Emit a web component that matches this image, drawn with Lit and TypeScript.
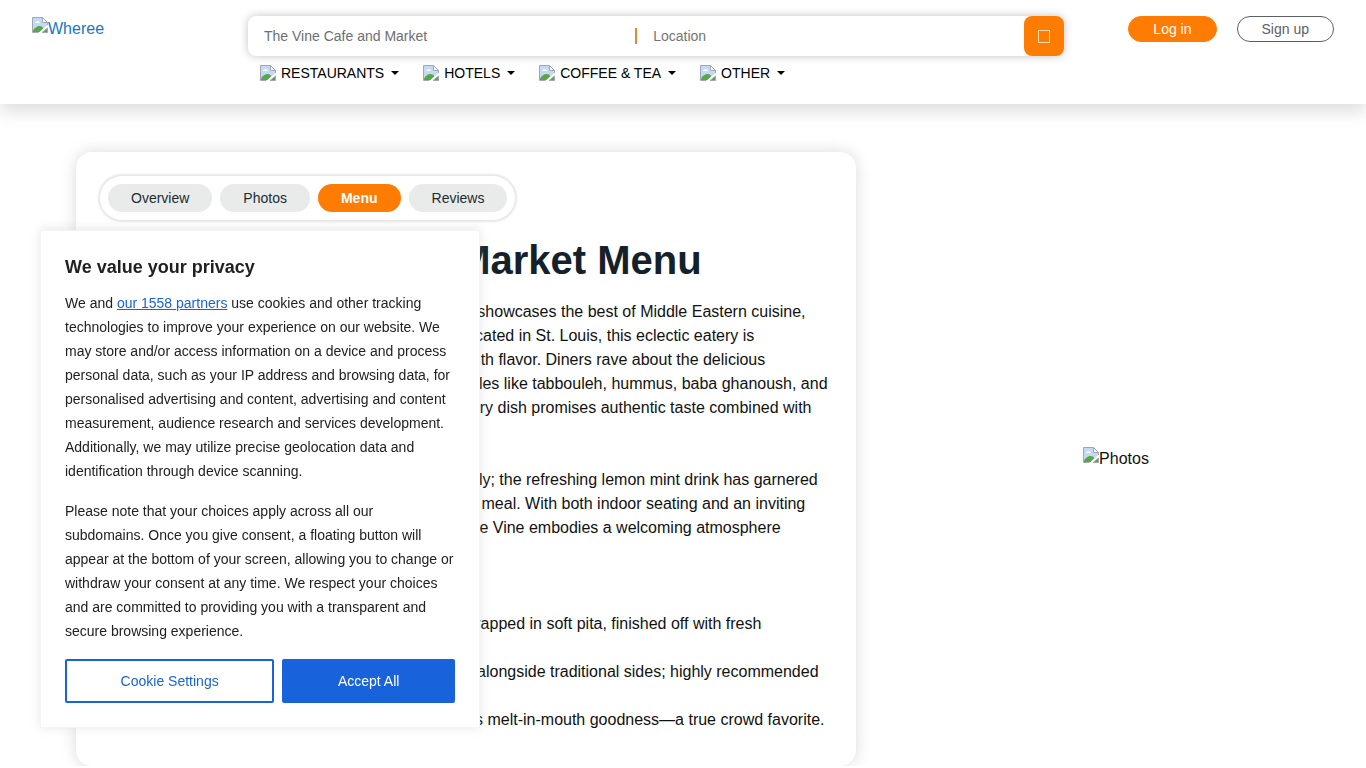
import { LitElement, html, css, svg } from "lit";
import { customElement } from "lit/decorators.js";

const brokenImage = () => html`<svg class="broken" viewBox="0 0 16 16" width="16" height="16" aria-hidden="true">
  ${svg`
    <path d="M1 1h9.5L15 5.500V8.500L8 15H1z" fill="#c3d9f6"/>
    <path d="M3 6c0-1 .8-1.600 1.600-1.400.5-1.100 2.300-.9 2.500.4.900 0 1.200.500 1.100 1H3z" fill="#fff"/>
    <path d="M1 15v-1.500C3 10.500 5 9 7.500 9c1.700 0 3 .8 3.800 2.200L7.500 15z" fill="#55a747"/>
    <path d="M.5 15.500V.500h10l5 5v3M.5 15.500h6" fill="none" stroke="#a3a7b5"/>
    <path d="M10.500.500v5h5z" fill="#fff" stroke="#a3a7b5"/>
    <path d="M15.500 11v4.500H10z" fill="#55a747" stroke="#a3a7b5"/>
    <path d="M16 8.500L7.500 16" stroke="#fff" stroke-width="1.500"/>
  `}
</svg>`;

const categories = ["RESTAURANTS", "HOTELS", "COFFEE & TEA", "OTHER"];
const tabs = ["Overview", "Photos", "Menu", "Reviews"];

const intro = [
  "The menu at The Vine Cafe and Market impressively showcases the best of Middle Eastern cuisine,",
  "offering a delightful blend of flavors and traditions. Located in St. Louis, this eclectic eatery is",
  "celebrated for its colorful dishes that come bursting with flavor. Diners rave about the delicious",
  "shawarma, falafel, and a generous array of fresh staples like tabbouleh, hummus, baba ghanoush, and",
  "lentil soup. Prepared fresh in the bustling kitchen, every dish promises authentic taste combined with",
  "warm hospitality.",
].join("\n");

const drinks = [
  "The delicious beverage selection shines just as brightly; the refreshing lemon mint drink has garnered",
  "praise from customers as a perfect companion to any meal. With both indoor seating and an inviting",
  "patio for long warm summer evenings with friends, The Vine embodies a welcoming atmosphere",
  "for everyone who visits.",
].join("\n");

const highlights = [
  "Chicken Shawarma: servings of marinated chicken wrapped in soft pita, finished off with fresh\nvegetables.",
  "Falafel Platter: Crispy spiced chickpea fritters served alongside traditional sides; highly recommended\nby regulars.",
  "Lamb Kebab: Perfectly charred grilled meat that offers melt-in-mouth goodness—a true crowd favorite.",
];

@customElement("site-header")
class SiteHeader extends LitElement {
  static styles = css`
    :host { display: block; }
    * { box-sizing: border-box; }
    .bar {
      display: flex; align-items: flex-start; padding: 16px 32px 0;
      height: 104px; background: #fff; box-shadow: 0 8px 16px rgba(0, 0, 0, 0.13);
    }
    .logo {
      flex: 0 0 216px; display: flex; color: #1976c5; text-decoration: none;
      font-size: 16px; line-height: 26px;
    }
    .broken { flex: none; display: block; margin-top: 1px; }
    .center { flex: 1; min-width: 0; }
    .search {
      display: flex; align-items: center; height: 40px; border-radius: 8px;
      background: #fff; box-shadow: 0 0 8px rgba(0, 0, 0, 0.25);
    }
    .field {
      flex: 1; min-width: 0; height: 40px; padding: 0 16px; border: 0; outline: 0;
      background: transparent; font: 14px "Liberation Sans", Arial, sans-serif; color: #6c6f73;
    }
    .field::placeholder { color: #757575; opacity: 1; }
    .rule { width: 2px; height: 16px; background: #e08a3c; }
    .go {
      width: 40px; height: 40px; padding: 0; border: 0; border-radius: 8px;
      background: #ff7c03; display: grid; place-items: center;
    }
    .nav { display: flex; margin-top: 5px; }
    .item {
      display: flex; align-items: center; gap: 5px; padding: 0 12px; border: 0;
      background: none; color: #000; font: 14px/24px "Liberation Sans", Arial, sans-serif;
    }
    .item .broken { margin: 0; }
    .caret {
      border: 4px solid transparent; border-top-color: #000; border-bottom: 0; margin-left: 2px;
    }
    .account { flex: none; display: flex; gap: 20px; margin-left: 64px; }
    .pill {
      height: 26px; padding: 0 24px; border: 1px solid #ff7c03; border-radius: 13px;
      background: #ff7c03; color: #fff; text-decoration: none;
      font-size: 14px; line-height: 24px;
    }
    .outline { background: #fff; border-color: #5c6166; color: #5c6166; }
  `;

  render() {
    return html`<header class="bar">
      <a class="logo" href="#">${brokenImage()}Wheree</a>
      <div class="center">
        <form class="search" @submit=${(e: Event) => e.preventDefault()}>
          <input class="field" aria-label="Search" value="The Vine Cafe and Market" />
          <span class="rule"></span>
          <input class="field" aria-label="Location" placeholder="Location" />
          <button class="go" aria-label="Search">
            <svg width="12" height="16" viewBox="0 0 12 16"><rect x=".5" y="2.500" width="11" height="12" fill="none" stroke="#ffe0a8"/></svg>
          </button>
        </form>
        <nav class="nav">
          ${categories.map((c) => html`<button class="item">${brokenImage()}<span>${c}</span><span class="caret"></span></button>`)}
        </nav>
      </div>
      <div class="account">
        <a class="pill" href="#">Log in</a>
        <a class="pill outline" href="#">Sign up</a>
      </div>
    </header>`;
  }
}

@customElement("privacy-notice")
class PrivacyNotice extends LitElement {
  static styles = css`
    * { box-sizing: border-box; }
    .notice {
      position: fixed; left: 40px; bottom: 40px; width: 440px; padding: 24px;
      background: #fff; border: 1px solid #f4f4f4; box-shadow: 0 -1px 10px rgba(172, 171, 171, 0.3);
      color: #212121; font-size: 14px; line-height: 24px;
    }
    .title { margin: 0 0 12px; font-size: 18px; line-height: 24px; }
    .text { margin: 0 0 16px; }
    .link { color: #1863dc; }
    .actions { display: flex; gap: 8px; }
    .button {
      flex: 1 1 auto; height: 44px; padding: 0 24px; border: 2px solid #1863dc; border-radius: 2px;
      background: #1863dc; color: #fff; font: 14px/24px "Liberation Sans", Arial, sans-serif;
    }
    .plain { background: #fff; color: #1863dc; }
  `;

  render() {
    return html`<section class="notice" role="dialog" aria-labelledby="title">
      <h2 class="title" id="title">We value your privacy</h2>
      <p class="text">We and <a class="link" href="#">our 1558 partners</a> use cookies and other tracking technologies to improve your experience on our website. We may store and/or access information on a device and process personal data, such as your IP address and browsing data, for personalised advertising and content, advertising and content measurement, audience research and services development. Additionally, we may utilize precise geolocation data and identification through device scanning.</p>
      <p class="text">Please note that your choices apply across all our subdomains. Once you give consent, a floating button will appear at the bottom of your screen, allowing you to change or withdraw your consent at any time. We respect your choices and are committed to providing you with a transparent and secure browsing experience.</p>
      <div class="actions">
        <button class="button plain">Cookie Settings</button>
        <button class="button">Accept All</button>
      </div>
    </section>`;
  }
}

@customElement("app-root")
class AppRoot extends LitElement {
  static styles = css`
    :host {
      display: block; background: #fff; color: #111;
      font: 16px/24px "Liberation Sans", Arial, sans-serif;
    }
    * { box-sizing: border-box; }
    .page {
      display: grid; grid-template-columns: 780fr 348fr; column-gap: 86px;
      align-items: center; padding: 48px 76px 0;
    }
    .card {
      padding: 24px 24px 34px; border-radius: 16px; background: #fff;
      box-shadow: 0 0 16px rgba(0, 0, 0, 0.15);
    }
    .tabs {
      display: flex; gap: 8px; width: max-content; padding: 8px; border-radius: 24px;
      box-shadow: 0 0 2px 2px #e6e7e7;
    }
    .tab {
      padding: 0 23px; border-radius: 14px; background: #e9ebeb; color: #212b2e;
      font-size: 14px; line-height: 28px; text-decoration: none;
    }
    .active { background: #ff7c03; color: #fff; font-weight: bold; }
    .heading { margin: 16px 0; font-size: 40px; line-height: 48px; color: #14212a; }
    .text { margin: 0 0 24px; white-space: pre; }
    .list { margin: 0; padding: 0; list-style: none; white-space: pre; }
    .photo { margin: 0; display: flex; justify-content: center; }
    .broken { display: block; flex: none; }
  `;

  render() {
    return html`
      <site-header></site-header>
      <main class="page">
        <article class="card">
          <nav class="tabs">
            ${tabs.map((t) => html`<a class="tab ${t === "Menu" ? "active" : ""}" href="#">${t}</a>`)}
          </nav>
          <h1 class="heading">The Vine Cafe and Market Menu</h1>
          <p class="text">${intro}</p>
          <p class="text">${drinks}</p>
          <div>Menu Highlights:</div>
          <ul class="list">${highlights.map((h) => html`<li>${h}</li>`)}</ul>
        </article>
        <aside class="photo">${brokenImage()}<span>Photos</span></aside>
      </main>
      <privacy-notice></privacy-notice>
    `;
  }
}
